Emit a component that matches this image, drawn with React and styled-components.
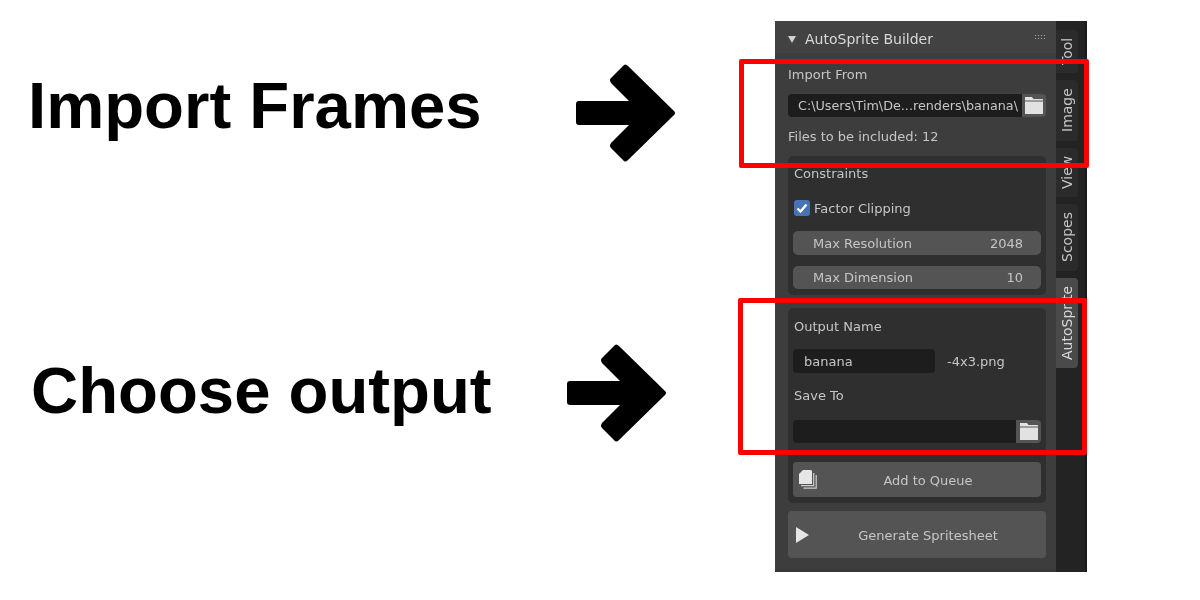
import React from 'react'
import styled, { createGlobalStyle } from 'styled-components'

const GlobalStyle = createGlobalStyle`
  html, body {
    margin: 0;
    padding: 0;
    background: #fff;
  }
`
const Page = styled.div`
  width: 1200px;
  height: 600px;
  overflow: hidden;
  display: flex;
  align-items: flex-start;
  background: #fff;
`
const Callouts = styled.div`
  width: 775px;
  flex: none;
`
const Callout = styled.div`
  display: flex;
  align-items: center;
  height: 100px;
  margin-top: ${(p) => p.$top}px;
  padding-left: ${(p) => p.$left}px;
  gap: ${(p) => p.$gap}px;
`
const Heading = styled.h1`
  margin: 0;
  font: bold 65.3px 'Liberation Sans', Arial, sans-serif;
  color: #000;
  white-space: nowrap;
`
const ArrowIcon = styled.svg`
  flex: none;
  margin-top: ${(p) => p.$drop}px;
`
const Panel = styled.div`
  position: relative;
  display: flex;
  box-sizing: border-box;
  width: 312px;
  height: 551px;
  margin-top: 21px;
  background: #232323;
  border-right: 2px solid #1b1b1b;
  font: 13px 'DejaVu Sans', sans-serif;
  color: #c6c6c6;
`
const Main = styled.div`
  box-sizing: border-box;
  width: 281px;
  flex: none;
  background: #3d3d3d;
  border-bottom: 3px solid #383838;
  filter: blur(0.4px);
`
const Header = styled.div`
  box-sizing: border-box;
  display: flex;
  align-items: center;
  height: 32px;
  padding: 4px 9px 0 13px;
  background: #424242;
  color: #d8d8d8;
  font-size: 14px;
`
const Caret = styled.span`
  width: 0;
  height: 0;
  margin-right: 9px;
  border-left: 4.5px solid transparent;
  border-right: 4.5px solid transparent;
  border-top: 7px solid #d0d0d0;
`
const Grip = styled.svg`
  margin: -4px 0 0 auto;
`
const Body = styled.div`
  padding: 0 10px 0 13px;
`
const Label = styled.div`
  height: 18px;
  margin-top: ${(p) => p.$top || 0}px;
  margin-left: ${(p) => p.$indent || 0}px;
  line-height: 18px;
  white-space: nowrap;
`
const Field = styled.div`
  display: flex;
  height: ${(p) => p.$height}px;
  margin-top: ${(p) => p.$top || 0}px;
  border-radius: 4px;
  overflow: hidden;
`
const Input = styled.div`
  flex: 1;
  padding-left: ${(p) => p.$pad || 0}px;
  background: #1d1d1d;
  font-size: ${(p) => p.$size || 13}px;
  line-height: ${(p) => p.$line}px;
  white-space: nowrap;
  overflow: hidden;
`
const FolderButton = styled.div`
  width: ${(p) => p.$width}px;
  flex: none;
  display: flex;
  align-items: center;
  justify-content: center;
  background: #545454;
`
const Box = styled.div`
  margin-top: ${(p) => p.$top}px;
  height: ${(p) => p.$height}px;
  padding: 0 5px;
  border-radius: 5px;
  background: #2f2f2f;
  overflow: hidden;
`
const CheckRow = styled.div`
  display: flex;
  align-items: center;
  gap: 4px;
  height: 16px;
  margin: 17px 0 0 1px;
`
const Check = styled.span`
  width: 16px;
  height: 16px;
  display: flex;
  align-items: center;
  justify-content: center;
  border-radius: 3px;
  background: #4772b3;
`
const NumberRow = styled.div`
  display: flex;
  justify-content: space-between;
  align-items: center;
  height: ${(p) => p.$height}px;
  margin-top: ${(p) => p.$top}px;
  padding: 0 18px 0 20px;
  border-radius: 5px;
  background: #545454;
`
const NameRow = styled.div`
  display: flex;
  align-items: center;
  gap: 12px;
  margin-top: 13px;
`
const NameInput = styled.div`
  box-sizing: border-box;
  width: 142px;
  height: 24px;
  padding-left: 11px;
  border-radius: 4px;
  background: #1d1d1d;
  line-height: 25px;
`
const ActionButton = styled.div`
  box-sizing: border-box;
  position: relative;
  display: flex;
  align-items: center;
  justify-content: center;
  height: ${(p) => p.$height}px;
  margin-top: ${(p) => p.$top}px;
  padding: 1px 0 0 22px;
  border-radius: 4px;
  background: #545454;
`
const ActionIcon = styled.svg`
  position: absolute;
  left: ${(p) => p.$left}px;
  top: 50%;
  transform: translateY(-50%);
`
const Tabs = styled.div`
  display: flex;
  flex-direction: column;
  gap: 7px;
  padding-top: 9px;
  width: 22px;
  filter: blur(0.4px);
`
const Tab = styled.div`
  display: flex;
  align-items: center;
  justify-content: center;
  height: ${(p) => p.$height}px;
  border-radius: 4px 0 0 4px;
  background: ${(p) => (p.$active ? '#4a4a4a' : '#2b2b2b')};
  color: ${(p) => (p.$active ? '#d8d8d8' : '#c6c6c6')};
  font-size: 14px;
  writing-mode: vertical-rl;
  transform: rotate(180deg);
`
const Highlight = styled.div`
  position: absolute;
  left: ${(p) => p.$left}px;
  top: ${(p) => p.$top}px;
  width: ${(p) => p.$width}px;
  height: ${(p) => p.$height}px;
  box-sizing: border-box;
  border: 5px solid #fe0000;
  border-radius: 2px;
`

function Arrow({ drop }) {
  return (
    <ArrowIcon $drop={drop} width="100" height="100" viewBox="0 0 100 100">
      <path
        d="M3 38 H53 L35 20 Q33 17 35 15 L47 3 Q49 0 52 3 L98 48 Q100 50 98 52 L52 97 Q49 100 47 97 L35 85 Q33 83 35 80 L53 62 H3 Q0 62 0 59 V41 Q0 38 3 38 Z"
        fill="#000"
      />
    </ArrowIcon>
  )
}

function Folder() {
  return (
    <svg width="18" height="17" viewBox="0 0 18 17">
      <path d="M0 0 H7 L8.5 2 H18 V3.6 H0 Z M0 4.4 H18 V17 H0 Z" fill="#e2e2e2" />
    </svg>
  )
}

export default function App() {
  return (
    <Page>
      <GlobalStyle />
      <Callouts>
        <Callout $top={55} $left={28} $gap={94}>
          <Heading>Import Frames</Heading>
          <Arrow drop={16} />
        </Callout>
        <Callout $top={185} $left={31} $gap={75}>
          <Heading>Choose output</Heading>
          <Arrow drop={6} />
        </Callout>
      </Callouts>

      <Panel>
        <Main>
          <Header>
            <Caret />
            AutoSprite Builder
            <Grip width="12" height="5" viewBox="0 0 12 5">
              <path
                d="M0 0h1v1H0zM3 0h1v1H3zM6 0h1v1H6zM9 0h1v1H9zM0 3h1v1H0zM3 3h1v1H3zM6 3h1v1H6zM9 3h1v1H9z"
                fill="#a8a8a8"
              />
            </Grip>
          </Header>
          <Body>
            <Label $top={13}>Import From</Label>
            <Field $top={10} $height={23}>
              <Input $pad={10} $line={23} $size={12.75}>C:\Users\Tim\De...renders\banana\</Input>
              <FolderButton $width={24}><Folder /></FolderButton>
            </Field>
            <Label $top={11}>Files to be included: 12</Label>

            <Box $top={10} $height={139}>
              <Label $top={9} $indent={1}>Constraints</Label>
              <CheckRow>
                <Check>
                  <svg width="12" height="12" viewBox="0 0 12 12">
                    <path d="M1.5 6.5 L4.5 9.5 L10.5 2.5" fill="none" stroke="#fff" strokeWidth="2.3" />
                  </svg>
                </Check>
                Factor Clipping
              </CheckRow>
              <NumberRow $top={15} $height={24}>
                <span>Max Resolution</span>
                <span>2048</span>
              </NumberRow>
              <NumberRow $top={11} $height={23}>
                <span>Max Dimension</span>
                <span>10</span>
              </NumberRow>
            </Box>

            <Box $top={13} $height={195}>
              <Label $top={10} $indent={1}>Output Name</Label>
              <NameRow>
                <NameInput>banana</NameInput>
                -4x3.png
              </NameRow>
              <Label $top={14} $indent={1}>Save To</Label>
              <Field $top={15} $height={23}>
                <Input $line={23} />
                <FolderButton $width={25}><Folder /></FolderButton>
              </Field>
              <ActionButton $top={19} $height={35}>
                <ActionIcon $left={6} width="19" height="20" viewBox="0 0 19 20">
                  <path d="M4 0 H12 L13 1 V14 H0 V4 Z" fill="#e6e6e6" />
                  <path d="M14.7 3 V15.6 H2 M17.2 5 V18.2 H4.5" fill="none" stroke="#cfcfcf" strokeWidth="1.2" />
                </ActionIcon>
                Add to Queue
              </ActionButton>
            </Box>

            <ActionButton $top={8} $height={47}>
              <ActionIcon $left={8} width="13" height="16" viewBox="0 0 13 16">
                <path d="M0 0 L13 8 L0 16 Z" fill="#e6e6e6" />
              </ActionIcon>
              Generate Spritesheet
            </ActionButton>
          </Body>
        </Main>

        <Tabs>
          <Tab $height={43}>Tool</Tab>
          <Tab $height={61}>Image</Tab>
          <Tab $height={49}>View</Tab>
          <Tab $height={67}>Scopes</Tab>
          <Tab $height={90} $active>AutoSprite</Tab>
        </Tabs>

        <Highlight $left={-36} $top={38} $width={350} $height={109} />
        <Highlight $left={-37} $top={277} $width={349} $height={157} />
      </Panel>
    </Page>
  )
}
